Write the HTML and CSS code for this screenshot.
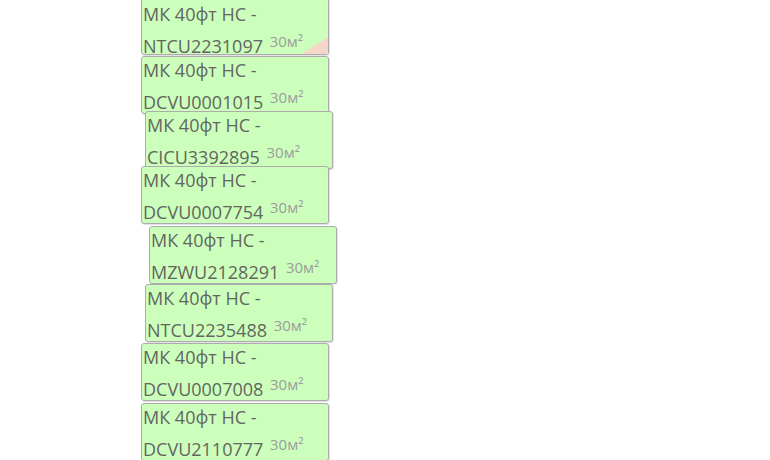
FILE: index.html
```html
<!DOCTYPE html>
<html lang="ru">
<head>
    <meta charset="UTF-8">
    <title>Контейнеры</title>
    <link rel="stylesheet" href="styles.css">
</head>
<body>
    <div class="timeline">
        <div class="item item-first" style="left: 141px; top: -3px;">
            <div class="label">МК 40фт НС - NTCU2231097 <span class="area">30м²</span></div>
            <span class="corner"></span>
        </div>
        <div class="item" style="left: 141px; top: 56px;">
            <div class="label">МК 40фт НС - DCVU0001015 <span class="area">30м²</span></div>
        </div>
        <div class="item" style="left: 145px; top: 111px;">
            <div class="label">МК 40фт НС - CICU3392895 <span class="area">30м²</span></div>
        </div>
        <div class="item" style="left: 141px; top: 166px;">
            <div class="label">МК 40фт НС - DCVU0007754 <span class="area">30м²</span></div>
        </div>
        <div class="item" style="left: 149px; top: 226px;">
            <div class="label">МК 40фт НС - MZWU2128291 <span class="area">30м²</span></div>
        </div>
        <div class="item" style="left: 145px; top: 284px;">
            <div class="label">МК 40фт НС - NTCU2235488 <span class="area">30м²</span></div>
        </div>
        <div class="item" style="left: 141px; top: 343px;">
            <div class="label">МК 40фт НС - DCVU0007008 <span class="area">30м²</span></div>
        </div>
        <div class="item" style="left: 141px; top: 403px;">
            <div class="label">МК 40фт НС - DCVU2110777 <span class="area">30м²</span></div>
        </div>
    </div>
</body>
</html>
```

FILE: styles.css
```css
* {
    margin: 0;
    padding: 0;
    box-sizing: border-box;
}

body {
    font-family: 'Open Sans', 'Noto Sans', sans-serif;
    background: #fff;
    width: 770px;
    height: 460px;
    overflow: hidden;
}

.timeline {
    position: relative;
    width: 770px;
    height: 460px;
}

.item {
    position: absolute;
    width: 188px;
    height: 58px;
    background: #ccffbc;
    border: 1px solid #acacac;
    border-radius: 3px;
    box-shadow: 1px 1px 1px rgba(0, 0, 0, 0.12);
}

.label {
    font-size: 18px;
    line-height: 32px;
    color: #636660;
    padding-left: 1px;
    margin-top: -3px;
}

.item-first .label {
    margin-top: 0;
}

.area {
    font-size: 15px;
    color: #9c9c9c;
    vertical-align: 6px;
    line-height: 1;
    margin-left: 2px;
}

.corner {
    position: absolute;
    right: 0;
    bottom: 0;
    width: 0;
    height: 0;
    border-left: 27px solid transparent;
    border-bottom: 17px solid #f6d6c8;
}
```
